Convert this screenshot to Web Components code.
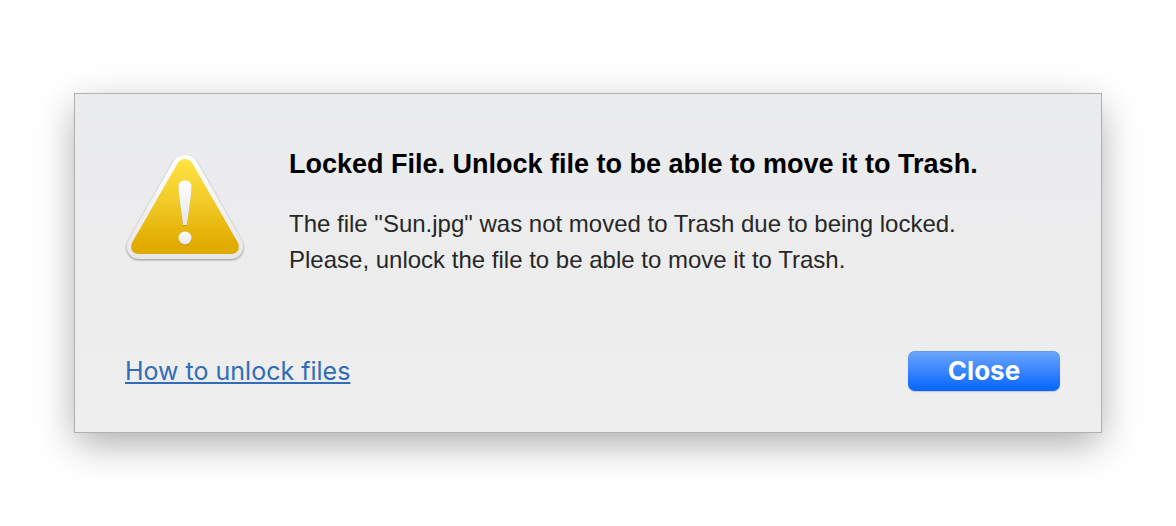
<!DOCTYPE html>
<html lang="en">
<head>
<meta charset="utf-8">
<meta name="viewport" content="width=device-width, initial-scale=1">
<title>Locked File</title>
<style>
  body {
    margin: 0;
    padding: 93px 74px;
    background: #fff;
    font-family: "Liberation Sans", Helvetica, Arial, sans-serif;
  }
</style>
</head>
<body>
<alert-dialog>
  <warning-icon slot="icon"></warning-icon>
  <span slot="heading">Locked File. Unlock file to be able to move it to Trash.</span>
  <span slot="message">The file "Sun.jpg" was not moved to Trash due to being locked.<br>Please, unlock the file to be able to move it to Trash.</span>
  <help-link slot="help" href="#unlock">How to unlock files</help-link>
  <push-button slot="action">Close</push-button>
</alert-dialog>

<script>
class WarningIcon extends HTMLElement {
  constructor() {
    super();

    const shadowRoot = this.attachShadow({mode: 'open'});
    shadowRoot.innerHTML = `
      <style>
        :host{
          display:block;
          width:120px;
          height:112px;
        }

        svg{
          display:block;
          filter:drop-shadow(0 1px 1px rgba(0,0,0,.4));
        }
      </style>
      <svg width="120" height="112" viewBox="0 0 120 112" role="img" aria-label="Warning">
        <defs>
          <linearGradient id="rim" x1="0" y1="0" x2="0" y2="1">
            <stop offset="0" stop-color="#fff"/>
            <stop offset="1" stop-color="#e6e6e6"/>
          </linearGradient>
          <linearGradient id="face" x1="0" y1="0" x2="0" y2="1">
            <stop offset="0" stop-color="#ffe444"/>
            <stop offset=".45" stop-color="#f1cb28"/>
            <stop offset=".88" stop-color="#e2ac00"/>
            <stop offset="1" stop-color="#e0a900"/>
          </linearGradient>
          <linearGradient id="mark" x1="0" y1="0" x2="0" y2="1">
            <stop offset="0" stop-color="#fff"/>
            <stop offset="1" stop-color="#e6e6e6"/>
          </linearGradient>
        </defs>
        <path fill="url(#rim)" d="M48.500 9 C53 1 67 1 71.500 9 L116.500 88 C121 97 116 107 106 107 H14 C4 107 -1 97 3.500 88 Z"/>
        <path fill="url(#face)" d="M52.500 11.500 C56 5.500 64 5.500 67.500 11.500 L112 89 C116 96 113 102 106 102 H14 C7 102 4 96 8 89 Z"/>
        <g fill="#a98400" opacity=".6" transform="translate(0 1)">
          <path d="M53.500 34 C53.500 26.500 66.500 26.500 66.500 34 C66.500 45 63.500 60 62 73 H58 C56.500 60 53.500 45 53.500 34 Z"/>
          <circle cx="60" cy="86" r="6.500"/>
        </g>
        <path fill="url(#mark)" d="M53.500 34 C53.500 26.500 66.500 26.500 66.500 34 C66.500 45 63.500 60 62 73 H58 C56.500 60 53.500 45 53.500 34 Z"/>
        <circle fill="url(#mark)" cx="60" cy="86" r="6.500"/>
      </svg>
    `;
  }
}

class HelpLink extends HTMLElement {
  constructor() {
    super();

    const shadowRoot = this.attachShadow({mode: 'open'});
    shadowRoot.innerHTML = `
      <style>
        :host{
          display:block;
        }

        a{
          color:#2f6db8;
          font:25px/32px Inter, sans-serif;
          text-decoration:underline;
          text-decoration-thickness:2px;
          text-decoration-skip-ink:none;
          text-underline-offset:2px;
        }
      </style>
      <a><slot></slot></a>
    `;
  }

  connectedCallback() {
    this.shadowRoot.querySelector('a').href = this.getAttribute('href');
  }
}

class PushButton extends HTMLElement {
  constructor() {
    super();

    const shadowRoot = this.attachShadow({mode: 'open'});
    shadowRoot.innerHTML = `
      <style>
        :host{
          display:block;
        }

        button{
          display:block;
          min-width:152px;
          height:40px;
          padding:0 16px;
          border:0;
          border-radius:7px;
          background:linear-gradient(#6ca6fa, #0564ff);
          box-shadow:inset 0 1px 0 #5c9af5, 0 1px 1px rgba(0,0,0,.16);
          color:#fff;
          font:bold 26px/40px Inter, sans-serif;
        }
      </style>
      <button type="button"><slot></slot></button>
    `;
  }
}

class AlertDialog extends HTMLElement {
  constructor() {
    super();

    const shadowRoot = this.attachShadow({mode: 'open'});
    shadowRoot.innerHTML = `
      <style>
        :host{
          display:block;
        }

        .dialog{
          box-sizing:border-box;
          padding:52px 41px 41px 50px;
          border:1px solid #b0b0b3;
          background:linear-gradient(#eaebed, #ededee 60%, #eee);
          box-shadow:0 12px 36px -2px rgba(0,0,0,.34);
        }

        .body{
          display:flex;
          gap:44px;
        }

        .icon{
          flex:none;
          padding-top:6px;
        }

        .text{
          flex:1;
        }

        h1{
          margin:0 0 24px;
          color:#000;
          font-size:27px;
          line-height:36px;
        }

        p{
          margin:0;
          color:#272727;
          font-size:24px;
          line-height:36px;
        }

        .footer{
          display:flex;
          align-items:center;
          justify-content:space-between;
          margin-top:73px;
        }
      </style>
      <div class="dialog" role="alertdialog" aria-labelledby="heading" aria-describedby="message">
        <div class="body">
          <div class="icon"><slot name="icon"></slot></div>
          <div class="text">
            <h1 id="heading"><slot name="heading"></slot></h1>
            <p id="message"><slot name="message"></slot></p>
          </div>
        </div>
        <div class="footer">
          <slot name="help"></slot>
          <slot name="action"></slot>
        </div>
      </div>
    `;
  }
}

customElements.define('warning-icon', WarningIcon);
customElements.define('help-link', HelpLink);
customElements.define('push-button', PushButton);
customElements.define('alert-dialog', AlertDialog);
</script>
</body>
</html>
